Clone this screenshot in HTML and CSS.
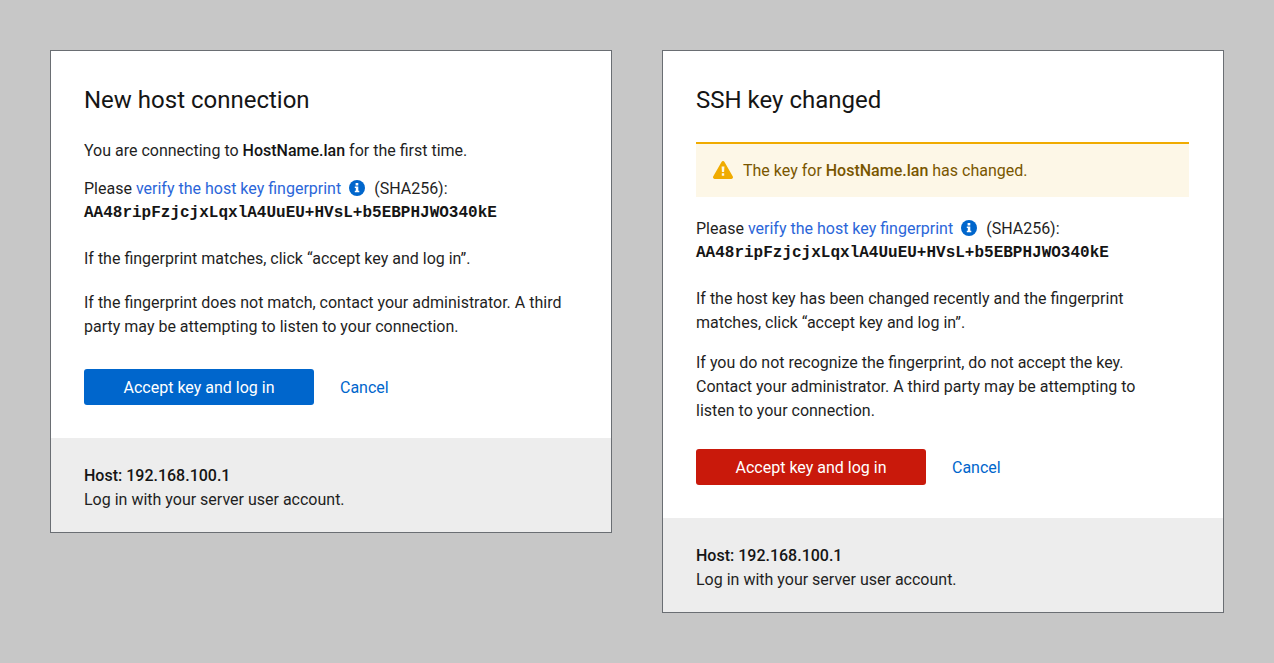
FILE: index.html
```html
<!DOCTYPE html>
<html lang="en">
<head>
<meta charset="utf-8">
<meta name="viewport" content="width=device-width, initial-scale=1">
<title>Host connection</title>
<link rel="stylesheet" href="styles.css">
</head>
<body>
<main class="dialogs">
  <section class="card" aria-labelledby="new-title">
    <div class="card-body">
      <h1 class="title" id="new-title">New host connection</h1>
      <p class="intro">You are connecting to <strong>HostName.lan</strong> for the first time.</p>
      <div class="key">
        <p class="key-label">Please <a class="link" href="#verify">verify the host key fingerprint</a><svg class="info" viewBox="0 0 16 16" aria-hidden="true"><circle cx="8" cy="8" r="8" fill="#06c"/><path fill="#fff" d="M6.6 2.9h2.7v2.5H6.6zM5.8 6.5h3.5v4.2h1v1.6H5.8v-1.6h1V8.1h-1z"/></svg>(SHA256):</p>
        <code class="fingerprint">AA48ripFzjcjxLqxlA4UuEU+HVsL+b5EBPHJWO340kE</code>
      </div>
      <div class="advice advice-loose">
        <p>If the fingerprint matches, click “accept key and log in”.</p>
        <p>If the fingerprint does not match, contact your administrator. A third party may be attempting to listen to your connection.</p>
      </div>
      <div class="actions">
        <button class="accept" type="button">Accept key and log in</button>
        <button class="cancel" type="button">Cancel</button>
      </div>
    </div>
    <footer class="card-footer">
      <p><strong>Host: 192.168.100.1</strong></p>
      <p>Log in with your server user account.</p>
    </footer>
  </section>

  <section class="card" aria-labelledby="changed-title">
    <div class="card-body">
      <h1 class="title" id="changed-title">SSH key changed</h1>
      <div class="alert" role="alert">
        <svg class="warning" viewBox="0 0 20 18" aria-hidden="true"><path fill="#f0ab00" d="M8.5.9a1.75 1.75 0 0 1 3 0l8.2 14.4A1.75 1.75 0 0 1 18.200 18H1.800A1.75 1.75 0 0 1 .3 15.300z"/><path fill="#fdf7e7" d="M8.600 5.500h2.800l-.3 5.500H8.900zM8.800 12.200h2.400v2.500H8.800z"/></svg>
        <p>The key for <strong>HostName.lan</strong> has changed.</p>
      </div>
      <div class="key">
        <p class="key-label">Please <a class="link" href="#verify">verify the host key fingerprint</a><svg class="info" viewBox="0 0 16 16" aria-hidden="true"><circle cx="8" cy="8" r="8" fill="#06c"/><path fill="#fff" d="M6.6 2.9h2.7v2.5H6.6zM5.8 6.5h3.5v4.2h1v1.6H5.8v-1.6h1V8.1h-1z"/></svg>(SHA256):</p>
        <code class="fingerprint">AA48ripFzjcjxLqxlA4UuEU+HVsL+b5EBPHJWO340kE</code>
      </div>
      <div class="advice">
        <p>If the host key has been changed recently and the fingerprint matches, click “accept key and log in”.</p>
        <p>If you do not recognize the fingerprint, do not accept the key. Contact your administrator. A third party may be attempting to listen to your connection.</p>
      </div>
      <div class="actions">
        <button class="accept accept-danger" type="button">Accept key and log in</button>
        <button class="cancel" type="button">Cancel</button>
      </div>
    </div>
    <footer class="card-footer">
      <p><strong>Host: 192.168.100.1</strong></p>
      <p>Log in with your server user account.</p>
    </footer>
  </section>
</main>
</body>
</html>
```
FILE: styles.css
```css
* { box-sizing: border-box; }

body {
  margin: 0;
  background: #c7c7c7;
  color: #1f1f1f;
  font-family: Roboto, "Liberation Sans", sans-serif;
  font-size: 16px;
  line-height: 24px;
}

p, h1 { margin: 0; }

strong {
  color: #151515;
  font-weight: 500;
}

.dialogs {
  display: grid;
  grid-template-columns: 1fr 1fr;
  align-items: start;
  gap: 50px;
  padding: 50px;
}

.card {
  background: #fff;
  border: 1px solid #6a6e73;
}

.card-body { padding: 33px 34px 33px 33px; }

.title {
  color: #151515;
  font-size: 24px;
  font-weight: 400;
  line-height: 32px;
}

.intro { margin-top: 23px; }

.intro + .key { margin-top: 14px; }
.alert + .key { margin-top: 20px; }

.link {
  color: #2b66d9;
  text-decoration: none;
}

.info {
  width: 16px;
  height: 16px;
  margin: 0 9px 0 8px;
  vertical-align: -2px;
}

.fingerprint {
  display: block;
  color: #151515;
  font-family: "Liberation Mono", monospace;
  font-size: 16px;
  font-weight: 700;
  line-height: 24px;
}

.alert {
  display: flex;
  align-items: flex-start;
  gap: 10px;
  margin-top: 26px;
  padding: 15px 17px 14px;
  border-top: 2px solid #f0ab00;
  background: #fdf7e7;
  color: #795600;
}

.alert strong { color: inherit; }

.warning {
  flex: none;
  width: 20px;
  height: 18px;
  margin-top: 2px;
}

.advice {
  display: grid;
  gap: 16px;
  margin-top: 22px;
  padding-right: 14px;
}

.advice-loose { gap: 20px; }

.actions {
  display: flex;
  align-items: center;
  gap: 26px;
  margin-top: 26px;
}

.advice-loose + .actions { margin-top: 30px; }

.accept, .cancel {
  border: 0;
  font: inherit;
  cursor: pointer;
}

.accept {
  min-width: 230px;
  padding: 7px 16px 5px;
  border-radius: 3px;
  background: #06c;
  color: #fff;
}

.accept-danger { background: #c9190b; }

.cancel {
  padding: 7px 0 5px;
  background: none;
  color: #06c;
}

.card-footer {
  padding: 26px 33px 20px;
  background: #ededed;
}
```
